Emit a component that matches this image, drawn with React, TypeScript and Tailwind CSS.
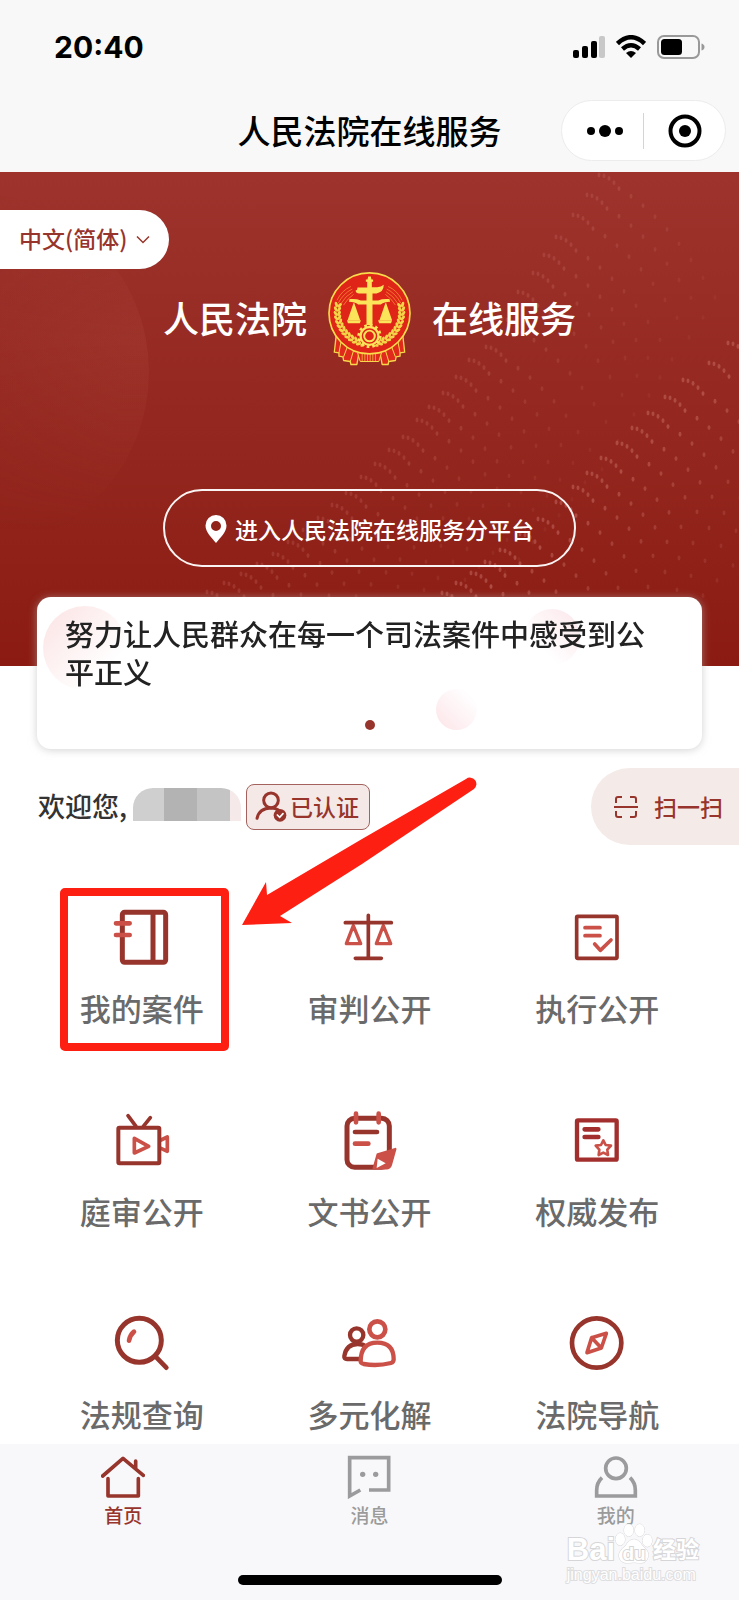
import React from "react";

const DARK = "#97352c";
const LIGHT = "#cb5148";

type Point = [number, number];

const outerBand: Point[] = [
  [599, 3], [587, 23], [573, 43], [556, 65], [544, 83], [533, 101], [518, 120], [502, 147], [486, 175],
  [469, 188], [456, 205], [443, 221], [429, 235], [417, 248], [403, 265], [389, 278], [375, 292],
  [361, 305], [346, 321], [332, 333], [318, 346], [303, 358], [288, 370], [273, 382], [257, 392],
  [241, 402], [224, 411], [207, 420],
];
const innerBand: Point[] = [
  [728, 171], [709, 191], [683, 208], [665, 225], [648, 241], [632, 256], [617, 271], [601, 286],
  [587, 301], [573, 315], [556, 330], [538, 347], [520, 362], [500, 378], [485, 390], [471, 401],
  [456, 411], [442, 421],
];

function bandDots(band: Point[], steps: number, opacity: number) {
  return band.flatMap(([x, y], row) =>
    Array.from({ length: steps }, (_, i) => {
      const dx = i < 5 ? i * 5 : 20 + (i - 4) * 12;
      const dy = i * i * 0.85;
      return (
        <ellipse
          key={`${row}-${i}`}
          cx={x + dx}
          cy={y + dy}
          rx={1.5}
          ry={2.4}
          opacity={opacity * (i < 4 ? 0.7 : 1 - i / (steps + 3))}
        />
      );
    })
  );
}

function HeroPattern() {
  return (
    <svg
      className="pointer-events-none absolute inset-0 h-full w-full"
      viewBox="0 0 739 494"
      preserveAspectRatio="xMaxYMin slice"
      aria-hidden="true"
    >
      <defs>
        <linearGradient id="orb" x1="0" y1="0" x2="1" y2="0.2">
          <stop offset="0.4" stopColor="#b04a40" stopOpacity="0" />
          <stop offset="1" stopColor="#b04a40" stopOpacity="0.24" />
        </linearGradient>
        <linearGradient id="orbFade" x1="0" y1="0" x2="0" y2="1">
          <stop offset="0" stopColor="#000" />
          <stop offset="0.45" stopColor="#fff" />
          <stop offset="1" stopColor="#000" />
        </linearGradient>
        <mask id="orbMask">
          <rect x="-200" y="10" width="360" height="350" fill="url(#orbFade)" />
        </mask>
      </defs>
      <circle cx="-30" cy="200" r="179" fill="url(#orb)" mask="url(#orbMask)" />
      <g fill="#d07a70">
        {bandDots(outerBand, 13, 0.34)}
        {bandDots(innerBand, 13, 0.6)}
      </g>
    </svg>
  );
}

function wheat(side: 1 | -1) {
  const leaves: React.ReactNode[] = [];
  for (let i = 0; i < 13; i++) {
    const angle = -14 + i * 7.6;
    const a = angle * (Math.PI / 180);
    const cx = 208 + side * Math.cos(a) * 97;
    const cy = 166 + Math.sin(a) * 97;
    leaves.push(
      <g key={i} transform={`translate(${cx} ${cy}) rotate(${side * angle})`}>
        <ellipse cx={-6} cy={0} rx={4.5} ry={8.5} transform="rotate(-32)" />
        <ellipse cx={6} cy={0} rx={4.5} ry={8.5} transform="rotate(32)" />
      </g>
    );
  }
  return leaves;
}

function Emblem() {
  return (
    <svg className="h-24 w-[85px] shrink-0" viewBox="80 44 256 288" role="img" aria-label="法院徽章">
      <g fill="#e02a1c" stroke="#f7d84b" strokeWidth="4" strokeLinejoin="round">
        <path d="M108 235 L102 288 L116 290 L116 300 L128 302 L130 313 L150 316 L152 325 L170 325 L178 280Z" />
        <path d="M308 235 L314 288 L300 290 L300 300 L288 302 L286 313 L266 316 L264 325 L246 325 L238 280Z" />
        <path d="M172 290 L180 316 H236 L244 290Z" strokeWidth="3" />
        <path d="M122 258l-6 32M142 270l-12 32M162 276l-12 40M294 258l6 32M274 270l12 32M254 276l12 40" strokeWidth="3" fill="none" />
        <path d="M186 292v24M194 292v24M202 292v24M210 292v24M218 292v24M226 292v24" strokeWidth="2" />
      </g>
      <circle cx="208" cy="171" r="122" fill="#df2418" stroke="#f9dc4a" strokeWidth="5" />
      <g stroke="#f7a23d" strokeWidth="2" fill="none">
        <path d="M110 132Q124 102 152 90M114 140Q130 110 156 98M122 142Q136 118 158 106M130 146Q142 126 160 114" />
        <path d="M306 132Q292 102 264 90M302 140Q286 110 260 98M294 142Q280 118 258 106M286 146Q274 126 256 114" />
      </g>
      <g fill="#f4d548">
        {wheat(1)}
        {wheat(-1)}
      </g>
      <g fill="#fbe45a">
        <path d="M204 60h8l2 9h5v7h-4v16h16q12 0 20-7q0 22-22 26h-12v96h-18V111h-22q-10 0-11-9q6-1 6-9h29V76h-4v-7h5z" />
        <path d="M148 128q20-2 34 4h52q14-6 34-4l2 8q-18 0-28 8h-68q-10-8-28-8z" />
        <path d="M160 140l-18 52h38l-18-52z" />
        <path d="M256 140l-18 52h38l-18-52z" />
        <path d="M140 192h42l-3 9h-36zM234 192h42l-3 9h-36z" />
      </g>
      <circle cx="208" cy="239" r="32" fill="#df2418" stroke="#fbe45a" strokeWidth="9" strokeDasharray="8 8.750" />
      <circle cx="208" cy="239" r="27" fill="#df2418" stroke="#fbe45a" strokeWidth="7" />
      <circle cx="208" cy="239" r="16" fill="#df2418" stroke="#fbe45a" strokeWidth="6" />
    </svg>
  );
}

function Icon({ viewBox, children }: { viewBox: string; children: React.ReactNode }) {
  return (
    <svg
      className="h-15 w-15"
      viewBox={viewBox}
      fill="none"
      stroke={DARK}
      strokeLinecap="round"
      strokeLinejoin="round"
      aria-hidden="true"
    >
      {children}
    </svg>
  );
}

const services = [
  {
    name: "我的案件",
    icon: (
      <Icon viewBox="333 441 180 180">
        <rect x="364" y="457" width="130" height="150" rx="7" strokeWidth="15" />
        <path d="M456 458v148" strokeWidth="15" strokeLinecap="butt" />
        <path d="M345 490h41M345 525h41" stroke={LIGHT} strokeWidth="14" />
      </Icon>
    ),
  },
  {
    name: "审判公开",
    icon: (
      <Icon viewBox="118 51 180 180">
        <path d="M161 107l-21 54h43zM251 107l-21 54h43z" stroke={LIGHT} strokeWidth="10" />
        <path d="M137 98h138M206 76v129M167 205h78" strokeWidth="11" />
      </Icon>
    ),
  },
  {
    name: "执行公开",
    icon: (
      <Icon viewBox="801 51 180 180">
        <rect x="830" y="79" width="121" height="126" rx="3" strokeWidth="11" />
        <path d="M855 113h45M855 137h45" stroke={LIGHT} strokeWidth="11" />
        <path d="M884 162l17 19l32-31" stroke={LIGHT} strokeWidth="11" />
      </Icon>
    ),
  },
  {
    name: "庭审公开",
    icon: (
      <Icon viewBox="155 60 180 180">
        <path d="M302 150l19-9v43l-19-9" stroke={LIGHT} strokeWidth="11" />
        <rect x="174" y="113" width="123" height="107" rx="3" strokeWidth="12" />
        <path d="M203 77l24 32M270 83l-21 26" strokeWidth="11" />
        <path d="M222 145v44l43-20z" stroke={LIGHT} strokeWidth="11" />
      </Icon>
    ),
  },
  {
    name: "文书公开",
    icon: (
      <Icon viewBox="838 60 180 180">
        <rect x="862" y="85" width="127" height="147" rx="23" strokeWidth="15" />
        <path d="M889 71v26M957 71v26" stroke={LIGHT} strokeWidth="14" />
        <path d="M886 126h66" strokeWidth="14" />
        <path d="M886 161h40" stroke={LIGHT} strokeWidth="14" />
        <path d="M942 235l12-42l53-16l-13 46q-3 11-14 12z" fill={LIGHT} stroke={LIGHT} strokeWidth="7" />
        <path d="M954 206l-3 28l27-14z" fill="#fff" stroke="none" />
      </Icon>
    ),
  },
  {
    name: "权威发布",
    icon: (
      <Icon viewBox="201 60 180 180">
        <rect x="231" y="91" width="119" height="118" rx="3" stroke="#a22f2d" strokeWidth="13" />
        <path d="M254 118h41M254 141h41" stroke="#a22f2d" strokeWidth="14" />
        <path d="M310 151l7 14l16 2l-11 12l2 16l-14-7l-14 7l2-16l-11-12l16-2z" stroke={LIGHT} strokeWidth="8" />
      </Icon>
    ),
  },
  {
    name: "法规查询",
    icon: (
      <Icon viewBox="155 69 180 180">
        <circle cx="237" cy="151" r="66" strokeWidth="15" />
        <path d="M286 200l32 33" strokeWidth="14" />
        <path d="M221 125q-12 10-15 27" stroke={LIGHT} strokeWidth="14" />
      </Icon>
    ),
  },
  {
    name: "多元化解",
    icon: (
      <Icon viewBox="838 69 180 180">
        <circle cx="891" cy="135" r="20" strokeWidth="13" />
        <path d="M902 207h-40q-9 0-8-9q6-36 40-36q16 0 24 8" strokeWidth="13" />
        <path d="M903 214q0-56 50-56q49 0 49 50q0 9-8 11q-41 10-82 3q-9-2-9-8z" fill="#fff" stroke={LIGHT} strokeWidth="13" />
        <circle cx="953" cy="118" r="24" stroke={LIGHT} strokeWidth="14" />
      </Icon>
    ),
  },
  {
    name: "法院导航",
    icon: (
      <Icon viewBox="201 669 180 180">
        <circle cx="290" cy="759" r="74" strokeWidth="14" />
        <path d="M319 730l-44 13l-14 45l43-14zM275 743l29 31" stroke={LIGHT} strokeWidth="11" />
      </Icon>
    ),
  },
];

const tabs = [
  {
    name: "首页",
    active: true,
    icon: (
      <svg className="h-11 w-11" viewBox="123 75 132 132" fill="none" stroke={DARK} strokeWidth="11" strokeLinecap="round" strokeLinejoin="round" aria-hidden="true">
        <path d="M128 138l61-53l61 51M227 93v20" />
        <path d="M144 146v52h91v-52" />
      </svg>
    ),
  },
  {
    name: "消息",
    active: false,
    icon: (
      <svg className="h-11 w-11" viewBox="862 75 132 132" fill="none" stroke="#9b9b9d" strokeWidth="11" aria-hidden="true">
        <path d="M928 180h59V83H870v115l32-18" />
        <circle cx="909" cy="133" r="8" fill="#9b9b9d" stroke="none" />
        <circle cx="948" cy="133" r="8" fill="#9b9b9d" stroke="none" />
      </svg>
    ),
  },
  {
    name: "我的",
    active: false,
    icon: (
      <svg className="h-11 w-11" viewBox="282 75 132 132" fill="none" stroke="#9b9b9d" strokeWidth="11" aria-hidden="true">
        <circle cx="348" cy="115" r="31" />
        <path d="M306 143q-16 15-16 38v17h116v-17q0-23-16-38" />
      </svg>
    ),
  },
];

function StatusIcons() {
  return (
    <div className="flex items-center gap-[11px]">
      <svg width="32" height="24" viewBox="0 0 32 24" aria-hidden="true">
        <rect x="0" y="15" width="6" height="8" rx="2" />
        <rect x="9" y="11" width="6" height="12" rx="2" />
        <rect x="18" y="6" width="6" height="17" rx="2" />
        <rect x="26" y="1" width="6" height="22" rx="2" fill="#c8c8c8" />
      </svg>
      <svg width="30" height="24" viewBox="0 0 30 24" fill="none" stroke="#000" strokeWidth="4.500" aria-hidden="true">
        <path d="M1.500 8.500q13.500-12.500 27 0" />
        <path d="M6.500 14q8.500-7.500 17 0" />
        <path d="M15 23l-5-5q5-4 10 0z" fill="#000" stroke="none" />
      </svg>
      <svg width="48" height="24" viewBox="0 0 48 24" aria-hidden="true">
        <rect x="1" y="1" width="41" height="22" rx="6" fill="none" stroke="#999" strokeWidth="2" />
        <rect x="4" y="4" width="21" height="16" rx="3.500" />
        <path d="M44.500 8.500q3 1 3 3.500t-3 3.500z" fill="#999" />
      </svg>
    </div>
  );
}

function Header() {
  return (
    <header className="bg-[#f8f8f8] pt-6 pb-[11px] text-black">
      <div className="flex h-[46px] items-center justify-between pr-[34px] pl-[54px]">
        <time className="font-[Inter] text-[30px] leading-none font-bold">20:40</time>
        <StatusIcons />
      </div>
      <div className="mt-[30px] grid h-[61px] grid-cols-[1fr_auto_1fr] items-center">
        <h1 className="col-start-2 text-[33px] leading-none font-medium">人民法院在线服务</h1>
        <div className="mr-[13px] flex h-full w-[165px] items-center justify-self-end rounded-full border border-[#ececec] bg-white">
          <button type="button" aria-label="更多" className="flex w-[81px] justify-center pl-1">
            <svg width="36" height="14" viewBox="0 0 36 14" aria-hidden="true">
              <circle cx="4" cy="7" r="4" />
              <circle cx="18" cy="7" r="6" />
              <circle cx="32" cy="7" r="4" />
            </svg>
          </button>
          <span className="h-9 w-px bg-[#d4d4d4]" />
          <button type="button" aria-label="关闭" className="flex flex-1 justify-center">
            <svg width="34" height="34" viewBox="0 0 34 34" aria-hidden="true">
              <circle cx="17" cy="17" r="14.500" fill="none" stroke="#000" strokeWidth="4" />
              <circle cx="17" cy="17" r="6" />
            </svg>
          </button>
        </div>
      </div>
    </header>
  );
}

function Hero() {
  return (
    <section className="relative bg-linear-to-b from-[#9d332c] to-[#8b1b12] pt-[38px] pb-[99px] text-white">
      <HeroPattern />
      <div className="relative">
        <div className="flex h-[59px] w-[169px] items-center rounded-r-full bg-white text-[#97352c]">
          <select
            aria-label="语言"
            className="h-[59px] w-full appearance-none bg-transparent pr-2 pb-0.5 pl-[19px] text-[23px] leading-[55px] font-medium outline-none"
          >
            <option>中文(简体)</option>
          </select>
          <svg className="pointer-events-none mr-[19px] -ml-[33px] shrink-0" width="14" height="9" viewBox="0 0 14 9" fill="none" stroke={DARK} strokeWidth="1.500" aria-hidden="true">
            <path d="M1 1.500l6 6l6-6" />
          </svg>
        </div>
        <h2 className="mt-0.5 flex items-center justify-center gap-5 text-[36px] leading-none font-medium">
          <span className="pb-1">人民法院</span>
          <Emblem />
          <span className="pb-1">在线服务</span>
        </h2>
        <button
          type="button"
          className="mx-auto mt-[122px] flex h-[78px] w-[413px] items-center justify-center gap-2 rounded-full border-2 border-white/95 pt-0.5 text-[23px] font-medium"
        >
          <svg width="22" height="28" viewBox="0 0 22 28" aria-hidden="true">
            <path fill="#fff" fillRule="evenodd" d="M11 0a10.500 10.500 0 0 1 10.500 10.500c0 6.500-6 12-10.500 17.500C6.500 22.500.5 17 .5 10.500A10.500 10.500 0 0 1 11 0zm0 6a5 5 0 1 0 0 10a5 5 0 0 0 0-10z" />
          </svg>
          进入人民法院在线服务分平台
        </button>
      </div>
    </section>
  );
}

function Banner() {
  return (
    <section className="relative mx-[37px] -mt-[69px] overflow-hidden rounded-[14px] bg-white px-7 pt-[17px] pb-[19px]">
      <span className="absolute top-[9px] left-1.5 h-[84px] w-[84px] rounded-full bg-linear-to-br from-[#fbe2e3] to-white to-75%" />
      <span className="absolute top-3 right-[122px] h-14 w-14 rounded-full bg-linear-to-bl from-[#fbe6ea] to-white to-70%" />
      <span className="absolute top-[92px] left-[399px] h-[41px] w-[41px] rounded-full bg-linear-to-tr from-[#fce4e8] to-white to-85%" />
      <p className="relative pr-1 text-[29px] leading-[38px] font-medium text-[#222]">
        努力让人民群众在每一个司法案件中感受到公平正义
      </p>
      <span className="relative mx-auto mt-[30px] block h-2.5 w-2.5 rounded-full bg-[#97352c]" />
    </section>
  );
}

function Welcome() {
  return (
    <section className="mt-[19px] flex h-[77px] items-center justify-between pl-[38px]">
      <div className="flex items-center">
        <span className="pb-0.5 text-[27px] leading-none font-medium text-[#333]">欢迎您,</span>
        <span className="mb-1 ml-1.5 flex h-[33px] w-[108px] overflow-hidden rounded-t-[20px]">
          <span className="w-[31px] bg-[#cfcfcf]" />
          <span className="w-[33px] bg-[#b3b3b3]" />
          <span className="w-[33px] bg-[#c4c4c4]" />
          <span className="flex-1 bg-[#f6e9e9]" />
        </span>
        <span className="ml-[5px] flex h-[46px] w-[124px] items-center gap-[3px] rounded-lg border border-[#a3625d] bg-[#f5e9e8] pl-2 text-[23px] font-medium text-[#97352c]">
          <svg className="shrink-0" width="32" height="32" viewBox="765 94 96 96" fill="none" stroke={DARK} strokeWidth="9" strokeLinecap="round" aria-hidden="true">
            <circle cx="813" cy="122" r="22" />
            <path d="M771 176q6-30 42-31q14 0 22 6" />
            <circle cx="840" cy="167" r="19" fill={DARK} stroke="none" />
            <path d="M832 166l7 7l10-11" stroke="#fff" strokeWidth="5" />
          </svg>
          已认证
        </span>
      </div>
      <button
        type="button"
        className="flex h-full w-[148px] items-center gap-4 rounded-l-full bg-[#f4eae8] pl-[23px] text-[23px] font-medium text-[#97352c]"
      >
        <svg width="24" height="24" viewBox="0 0 24 24" fill="none" stroke={DARK} strokeWidth="2" aria-hidden="true">
          <path d="M2 8V4q0-2 2-2h4M16 2h4q2 0 2 2v4M22 16v4q0 2-2 2h-4M8 22H4q-2 0-2-2v-4M0 12h24" />
        </svg>
        扫一扫
      </button>
    </section>
  );
}

function Highlight() {
  return (
    <>
      <span className="pointer-events-none absolute -top-[19px] left-8 h-[163px] w-[169px] rounded-[5px] border-8 border-[#fd2012]" />
      <svg
        className="pointer-events-none absolute -top-[131px] left-[214px] z-10"
        width="236"
        height="152"
        viewBox="0 0 236 152"
        aria-hidden="true"
      >
        <path
          fill="#fd2012"
          d="M0 149L24 106L25 119L120 63L224 3A6 6 0 0 1 232 13L120 88L38 140L50 147Z"
        />
      </svg>
    </>
  );
}

function Watermark() {
  return (
    <div
      className="pointer-events-none absolute right-10 bottom-4 flex flex-col items-start font-[Arial,'Liberation_Sans','Noto_Sans_CJK_SC',sans-serif] text-white [paint-order:stroke]"
      aria-hidden="true"
    >
      <div className="flex items-end font-bold [-webkit-text-stroke:2px_#d6d6d8]">
        <span className="text-[31px] leading-8">Bai</span>
        <span className="relative flex h-11 w-[38px] items-end justify-center">
          <svg className="absolute inset-0" width="38" height="44" viewBox="0 0 40 44" fill="#fff" stroke="#d6d6d8" aria-hidden="true">
            <ellipse cx="5.500" cy="17" rx="5" ry="6.500" />
            <ellipse cx="14.500" cy="7.500" rx="5" ry="6.500" />
            <ellipse cx="26" cy="7.500" rx="5" ry="6.500" />
            <ellipse cx="34" cy="18.500" rx="5" ry="6.500" />
            <path d="M20 17q5 0 9 7q7 5 6 11q-2 8-9 7q-6-1-12 0q-8 1-10-7q0-6 7-11q4-7 9-7z" />
          </svg>
          <span className="relative text-[19px] leading-6">du</span>
        </span>
        <span className="text-[23px] leading-8">经验</span>
      </div>
      <span className="text-[16px] leading-[18px] [-webkit-text-stroke:2px_#dedee0]">jingyan.baidu.com</span>
    </div>
  );
}

export default function App() {
  return (
    <div className="flex min-h-screen flex-col bg-white font-['Noto_Sans_CJK_SC',sans-serif]">
      <Header />
      <main className="flex-1">
        <Hero />
        <div className="relative drop-shadow-[0_1px_4px_rgba(180,180,180,0.6)]">
          <Banner />
        </div>
        <Welcome />
        <section className="grid grid-cols-3 gap-y-[83px] px-7 pt-[62px] pb-[11px]">
          {services.map((service, index) => (
            <div key={service.name} className="relative">
              <a href="#" className="flex flex-col items-center">
                {service.icon}
                <span className="mt-[22px] text-[31px] leading-[38px] font-medium text-[#6a6a6a]">{service.name}</span>
              </a>
              {index === 0 && <Highlight />}
            </div>
          ))}
        </section>
      </main>
      <footer className="relative bg-[#f8f8fa] pt-[11px] pb-[15px]">
        <nav className="grid grid-cols-3">
          {tabs.map((tab) => (
            <a
              key={tab.name}
              href="#"
              className={`flex flex-col items-center gap-1 text-[19px] leading-6 font-medium ${
                tab.active ? "text-[#97352c]" : "text-[#9b9b9b]"
              }`}
            >
              {tab.icon}
              {tab.name}
            </a>
          ))}
        </nav>
        <div className="mx-auto mt-12 h-2.5 w-[264px] rounded-full bg-black" />
        <Watermark />
      </footer>
    </div>
  );
}
